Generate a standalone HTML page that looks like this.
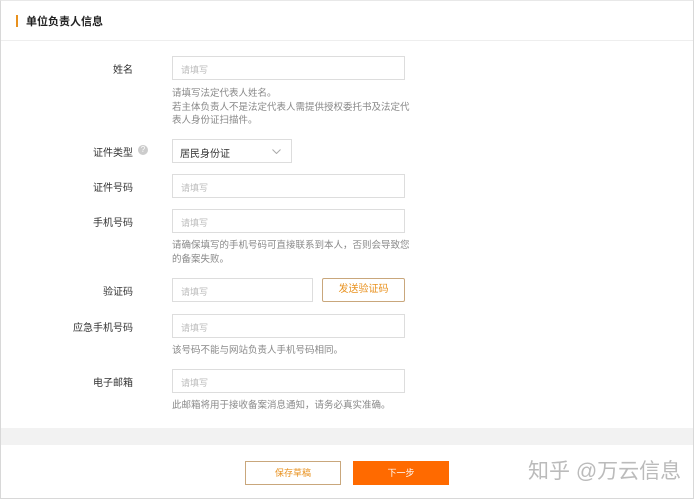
<!DOCTYPE html>
<html><head><meta charset="utf-8"><style>
*{margin:0;padding:0;box-sizing:border-box}
body{width:696px;height:500px;background:#fff;font-family:"Liberation Sans","Noto Sans CJK SC",sans-serif;position:relative;overflow:hidden;color:#333}
.frame{position:absolute;left:0;top:0;width:694px;height:499px;border:1px solid #d8d8d8;border-top:1px solid #e8e8e8}
.hdr{position:absolute;left:1px;top:1px;width:692px;height:40px;border-bottom:1px solid #eee}
.bar{position:absolute;left:15px;top:14px;width:2px;height:12px;background:#e8911e}
.ttl{position:absolute;left:25px;top:12px;font-size:11px;font-weight:bold;color:#222}
.lbl{position:absolute;right:563px;font-size:10px;color:#333;text-align:right;white-space:nowrap}
.in{position:absolute;left:172px;width:233px;height:24px;border:1px solid #ddd;font-size:9px;color:#bbb;padding:6px 8px;background:#fff}
.hint{position:absolute;left:172px;font-size:9.5px;color:#888;line-height:13.5px}
.btn{position:absolute;height:24px;font-size:10px;text-align:center;line-height:22px}
</style></head><body>
<div class="frame"></div>
<div class="hdr"><div class="bar"></div><div class="ttl">单位负责人信息</div></div>

<div class="lbl" style="top:61px">姓名</div>
<div class="in" style="top:56px">请填写</div>
<div class="hint" style="top:87px">请填写法定代表人姓名。<br>若主体负责人不是法定代表人需提供授权委托书及法定代<br>表人身份证扫描件。</div>

<div class="lbl" style="top:144px">证件类型</div>
<div style="position:absolute;left:138px;top:145px;width:10px;height:10px;border-radius:50%;background:#ccc;color:#fff;font-size:8px;text-align:center;line-height:10px">?</div>
<div class="in" style="top:139px;width:120px;color:#333;font-size:10px;padding:5px 7px">居民身份证<svg style="position:absolute;right:10px;top:9px" width="9" height="5" viewBox="0 0 9 5"><path d="M0.5 0.5L4.5 4.5L8.5 0.5" fill="none" stroke="#aaa"/></svg></div>

<div class="lbl" style="top:179px">证件号码</div>
<div class="in" style="top:174px">请填写</div>

<div class="lbl" style="top:214px">手机号码</div>
<div class="in" style="top:209px">请填写</div>
<div class="hint" style="top:239px">请确保填写的手机号码可直接联系到本人，否则会导致您<br>的备案失败。</div>

<div class="lbl" style="top:283px">验证码</div>
<div class="in" style="top:278px;width:141px">请填写</div>
<div class="btn" style="left:322px;top:278px;width:83px;border:1px solid #c9a77c;color:#e8911e;border-radius:2px">发送验证码</div>

<div class="lbl" style="top:319px">应急手机号码</div>
<div class="in" style="top:314px">请填写</div>
<div class="hint" style="top:344px">该号码不能与网站负责人手机号码相同。</div>

<div class="lbl" style="top:374px">电子邮箱</div>
<div class="in" style="top:369px">请填写</div>
<div class="hint" style="top:399px">此邮箱将用于接收备案消息通知，请务必真实准确。</div>

<div style="position:absolute;left:1px;top:428px;width:692px;height:17px;background:#f2f2f2"></div>

<div class="btn" style="left:245px;top:461px;width:96px;border:1px solid #c9a77c;color:#e8911e;font-size:9px">保存草稿</div>
<div class="btn" style="left:353px;top:461px;width:96px;background:#ff6a00;color:#fff;font-size:9px;line-height:24px">下一步</div>
<div style="position:absolute;left:528px;top:455px;font-size:21px;color:#bbb;white-space:nowrap">知乎 @万云信息</div>
</body></html>
